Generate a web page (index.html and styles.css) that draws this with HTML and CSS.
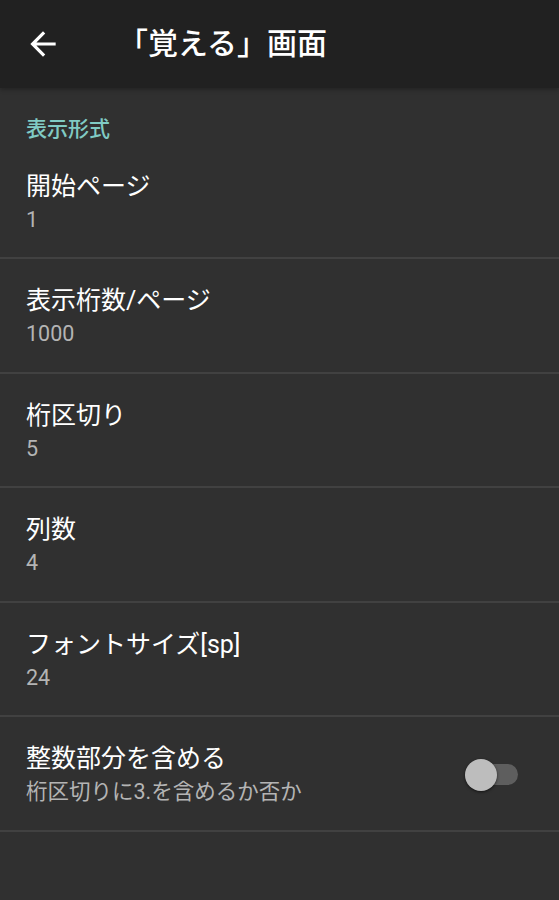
FILE: index.html
```html
<!DOCTYPE html>
<html lang="ja">
<head>
    <meta charset="UTF-8">
    <meta name="viewport" content="width=device-width, initial-scale=1.0">
    <title>「覚える」画面</title>
    <link rel="stylesheet" href="styles.css">
</head>
<body>
    <div class="app-bar">
        <div class="back-icon">
            <svg viewBox="0 0 24 24" width="38" height="38">
                <path fill="#ffffff" d="M20 11H7.83l5.59-5.59L12 4l-8 8 8 8 1.41-1.41L7.83 13H20v-2z"/>
            </svg>
        </div>
        <h1 class="app-title">「覚える」画面</h1>
    </div>

    <div class="prefs">
        <div class="category">表示形式</div>

        <div class="pref">
            <div class="pref-text">
                <div class="pref-title">開始ページ</div>
                <div class="pref-summary">1</div>
            </div>
        </div>
        <div class="pref">
            <div class="pref-text">
                <div class="pref-title">表示桁数/ページ</div>
                <div class="pref-summary">1000</div>
            </div>
        </div>
        <div class="pref">
            <div class="pref-text">
                <div class="pref-title">桁区切り</div>
                <div class="pref-summary">5</div>
            </div>
        </div>
        <div class="pref">
            <div class="pref-text">
                <div class="pref-title">列数</div>
                <div class="pref-summary">4</div>
            </div>
        </div>
        <div class="pref">
            <div class="pref-text">
                <div class="pref-title">フォントサイズ[sp]</div>
                <div class="pref-summary">24</div>
            </div>
        </div>
        <div class="pref">
            <div class="pref-text">
                <div class="pref-title">整数部分を含める</div>
                <div class="pref-summary">桁区切りに3.を含めるか否か</div>
            </div>
            <div class="switch">
                <div class="switch-track"></div>
                <div class="switch-thumb"></div>
            </div>
        </div>
    </div>
</body>
</html>
```

FILE: styles.css
```css
body {
    margin: 0;
    background-color: #303030;
    font-family: Roboto, "Noto Sans CJK JP", "Noto Sans", sans-serif;
    color: #ffffff;
    height: 900px;
    overflow: hidden;
}
.app-bar {
    height: 88px;
    background-color: #212121;
    display: flex;
    align-items: center;
    box-shadow: 0 2px 4px rgba(0, 0, 0, 0.25);
    position: relative;
}
.back-icon {
    width: 38px;
    height: 38px;
    margin-left: 24px;
    margin-right: 56px;
}
.back-icon svg {
    display: block;
}
.app-title {
    margin: 0;
    font-size: 30px;
    font-weight: 500;
    line-height: 40px;
}
.category {
    color: #80cbc4;
    font-size: 21px;
    font-weight: 500;
    line-height: 28px;
    padding: 27px 26px 1.5px;
}
.pref {
    display: flex;
    align-items: center;
    padding: 25px 26px 21.5px;
    border-bottom: 2px solid #414141;
}
.pref-text {
    flex: 1;
}
.pref-title {
    font-size: 25px;
    line-height: 34px;
}
.pref-summary {
    font-size: 21.5px;
    line-height: 32px;
    color: #b4b4b4;
}
.switch {
    width: 53px;
    height: 32px;
    margin-right: 15px;
    position: relative;
}
.switch-track {
    position: absolute;
    left: 0;
    right: 0;
    top: 5px;
    height: 21px;
    border-radius: 11px;
    background-color: #5e5e5e;
}
.switch-thumb {
    position: absolute;
    left: 0;
    top: 0;
    width: 32px;
    height: 32px;
    border-radius: 50%;
    background-color: #bdbdbd;
    box-shadow: 0 1px 3px rgba(0, 0, 0, 0.6);
}
```
